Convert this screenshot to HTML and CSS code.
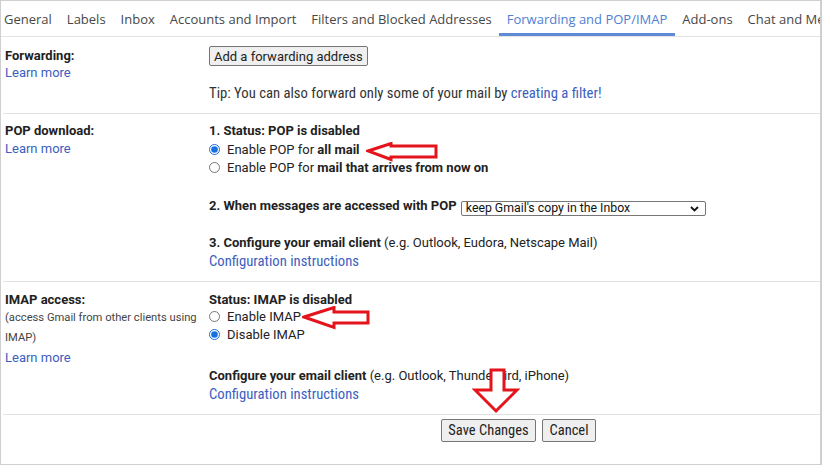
FILE: index.html
```html
<!DOCTYPE html>
<html lang="en">
<head>
	<meta charset="UTF-8">
	<title>Settings - Forwarding and POP/IMAP</title>
	<link rel="stylesheet" href="styles.css">
</head>
<body>
	<div class="page">
		<div class="tabs">
			<a class="tab">General</a>
			<a class="tab">Labels</a>
			<a class="tab">Inbox</a>
			<a class="tab">Accounts and Import</a>
			<a class="tab">Filters and Blocked Addresses</a>
			<a class="tab on">Forwarding and POP/IMAP</a>
			<a class="tab">Add-ons</a>
			<a class="tab">Chat and Meet</a>
		</div>

		<div class="row row-fwd">
			<div class="label">
				<div class="title">Forwarding:</div>
				<a class="link">Learn more</a>
			</div>
			<div class="value">
				<button class="btn btn-add">Add a forwarding address</button>
				<div class="tip narrow">Tip: You can also forward only some of your mail by <a class="link">creating a filter!</a></div>
			</div>
		</div>

		<div class="row row-pop">
			<div class="label">
				<div class="title">POP download:</div>
				<a class="link">Learn more</a>
			</div>
			<div class="value">
				<div class="title">1. Status: POP is disabled</div>
				<label class="opt first"><input type="radio" name="pop" checked>Enable POP for <b>all mail</b></label>
				<label class="opt"><input type="radio" name="pop">Enable POP for <b>mail that arrives from now on</b></label>
				<div class="step when"><b>2. When messages are accessed with POP</b>
					<span class="select">keep Gmail's copy in the Inbox
						<svg width="9" height="6" viewBox="0 0 9 6"><path d="M1 1l3.5 3.5L8 1" fill="none" stroke="#111" stroke-width="1.8"/></svg>
					</span>
				</div>
				<div class="step cfg"><b>3. Configure your email client</b> (e.g. Outlook, Eudora, Netscape Mail)</div>
				<a class="link narrow instr">Configuration instructions</a>
			</div>
		</div>

		<div class="row row-imap">
			<div class="label">
				<div class="title">IMAP access:</div>
				<div class="desc">(access Gmail from other clients using IMAP)</div>
				<a class="link more">Learn more</a>
			</div>
			<div class="value">
				<div class="title">Status: IMAP is disabled</div>
				<label class="opt"><input type="radio" name="imap">Enable IMAP</label>
				<label class="opt"><input type="radio" name="imap" checked>Disable IMAP</label>
				<div class="step cfg"><b>Configure your email client</b> (e.g. Outlook, Thunderbird, iPhone)</div>
				<a class="link narrow instr">Configuration instructions</a>
			</div>
		</div>

		<div class="actions">
			<button class="btn btn-big btn-save">Save Changes</button>
			<button class="btn btn-big btn-cancel">Cancel</button>
		</div>

		<!-- red annotation arrows -->
		<svg class="arrow arrow-pop" width="74" height="20" viewBox="0 0 74 20">
			<polygon points="2,9 25,1.5 25,4 70,4 70,15 25,15 25,17.5" fill="#fff" stroke="#e3141b" stroke-width="3"/>
		</svg>
		<svg class="arrow arrow-imap" width="70" height="24" viewBox="0 0 70 24">
			<polygon points="2,11 32,1.5 32,6 66,6 66,17 32,17 32,21.5" fill="#fff" stroke="#e3141b" stroke-width="3"/>
		</svg>
		<svg class="arrow arrow-save" width="48" height="46" viewBox="0 0 48 46">
			<polygon points="19,2 32,2 32,22 45,22 24,43 3,22 19,22" fill="#fff" stroke="#e3141b" stroke-width="3"/>
		</svg>
	</div>
</body>
</html>
```

FILE: styles.css
```css
body {
	margin: 0;
	font-family: Roboto, "Liberation Sans", Arial, sans-serif;
	font-size: 13px;
	color: #222;
}
a { text-decoration: none; cursor: pointer; }

.page {
	position: relative;
	width: 822px;
	height: 465px;
	box-sizing: border-box;
	border: 1px solid #cfcfcf;
	border-right-width: 2px;
	overflow: hidden;
	background: #fff;
}

.tabs {
	display: flex;
	height: 35px;
	margin-left: -4.5px;
	border-bottom: 1px solid #e3e3e3;
	white-space: nowrap;
	font-family: "Open Sans", Roboto, sans-serif;
	font-size: 13px;
}
.tab { display: flex; align-items: center; padding: 0 7.5px; color: #474747; }
.tab.on { color: #4f80d3; box-shadow: inset 0 -3px 0 #5d8bd6; }

.link { color: #3b60c0; }
.narrow { font-family: "Roboto Condensed", Roboto, sans-serif; font-size: 14.7px; }

.row {
	display: grid;
	grid-template-columns: 206px 1fr;
	margin-left: 2px;
	border-bottom: 1px solid #e3e3e3;
}
.label { padding-left: 2px; line-height: 17px; }
.title { font-weight: bold; line-height: 17px; }
.label .link { display: block; }

.row-fwd { padding: 10px 0 11px; }
.btn {
	font-family: Roboto, "Liberation Sans", Arial, sans-serif;
	font-size: 13px;
	color: #222;
	background: #efefef;
	border: 1px solid #767676;
	border-radius: 2px;
	padding: 0 7px;
	white-space: nowrap;
	cursor: pointer;
}
.btn-add { display: block; height: 20px; margin-top: -1px; padding: 0 4px; }
.tip { margin-top: 18px; line-height: 18px; color: #333; }

.row-pop { padding: 8px 0 10px; }
.row-pop .label .link { margin-top: 1px; }
.opt { display: block; line-height: 18px; }
.opt input { width: 11px; height: 11px; margin: 0 7px 0 0; vertical-align: -1px; accent-color: #1a6fe0; }
.opt.first { margin-top: 2px; }
.step { line-height: 18px; }
.when { margin-top: 20px; }
.cfg { margin-top: 18px; }
.instr { display: block; line-height: 19px; }

.select {
	display: inline-flex;
	align-items: center;
	justify-content: space-between;
	box-sizing: border-box;
	width: 245px;
	height: 15px;
	margin-left: 1px;
	padding: 0 6px 0 4px;
	border: 1px solid #767676;
	border-radius: 2px;
	font-size: 12.3px;
	line-height: 13px;
	color: #111;
	vertical-align: -2px;
}

.row-imap { padding: 9px 0 11px; }
.desc { font-size: 11.2px; line-height: 20px; color: #444; width: 200px; }
.more { line-height: 20px; }
.row-imap .cfg { margin-top: 23px; }
.row-imap .instr { line-height: 18px; }

.actions { display: flex; gap: 6px; padding: 4px 0 0 440px; }
.btn-big { height: 23px; padding: 0; font-family: "Roboto Condensed", Roboto, sans-serif; font-size: 14.5px; }
.btn-save { width: 95px; }
.btn-cancel { width: 54px; }

.arrow { position: absolute; }
.arrow-pop { left: 365px; top: 141px; }
.arrow-imap { left: 301px; top: 305px; }
.arrow-save { left: 471px; top: 367px; }
```
